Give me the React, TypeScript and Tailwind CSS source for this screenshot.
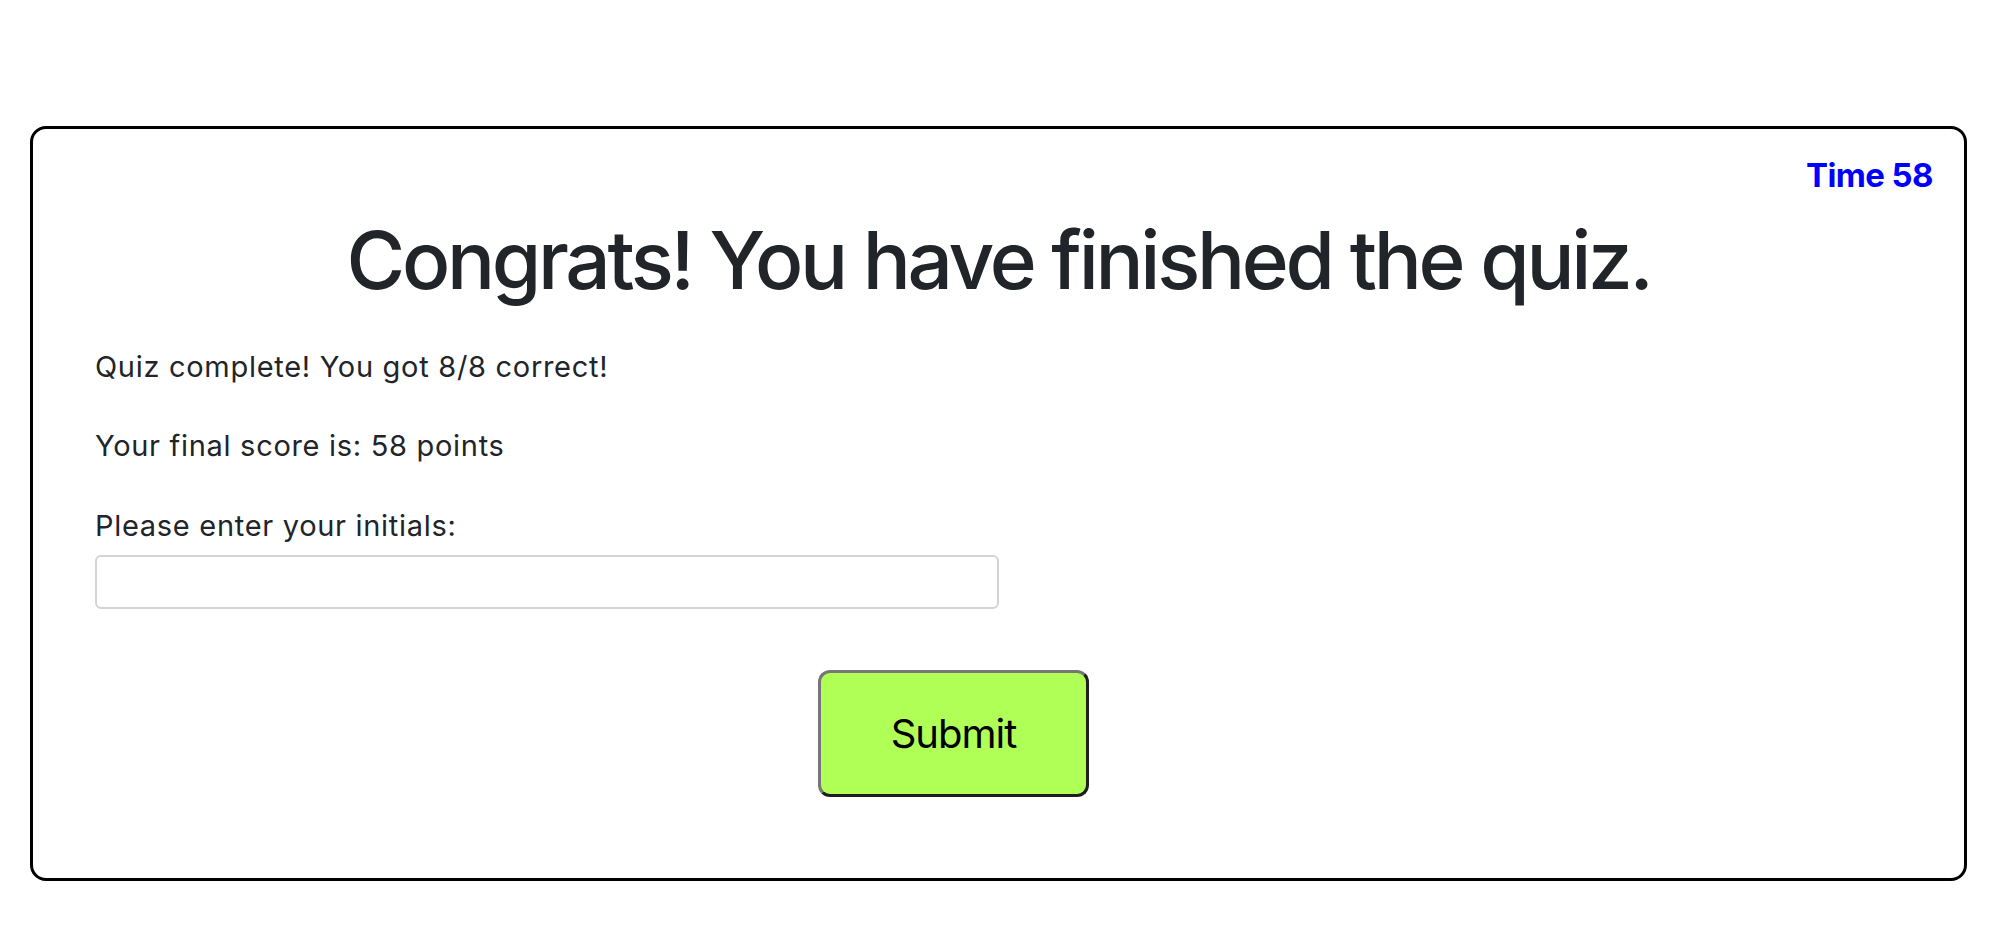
export default function App() {
  return (
    <div className="min-h-screen bg-white pt-[126px] pb-[61px] font-['Inter',sans-serif] text-[#212529]">
      <div className="ml-[30px] mr-[27px] rounded-[16px] border-[3px] border-black pt-[26px] pb-[81px]">
        <div className="pr-[31px] text-right text-[33px] font-bold leading-[40px] tracking-[-0.6px] text-[#0000ff]">
          Time 58
        </div>
        <h1 className="mt-[17px] text-center text-[80px] font-medium leading-[96px] tracking-[-3.3px]">
          Congrats! You have finished the quiz.
        </h1>
        <div className="pl-[62px] tracking-[0.7px]">
          <p className="mt-[39px] text-[29px] leading-[40px]">Quiz complete! You got 8/8 correct!</p>
          <p className="mt-[39px] text-[29px] leading-[40px]">Your final score is: 58 points</p>
          <label className="mt-[40px] block text-[29px] leading-[40px]">Please enter your initials:</label>
          <input
            type="text"
            className="mt-[9px] block h-[54px] w-[904px] rounded-[6px] border-2 border-[#d4d4d4] bg-white px-3 text-[29px] outline-none"
          />
        </div>
        <button
          type="button"
          className="mt-[61px] ml-[785px] block h-[127px] w-[271px] rounded-[12px] border-[3px] border-t-[#767676] border-l-[#767676] border-b-[#1e1e1e] border-r-[#1e1e1e] bg-[#b0ff57] text-[40px] tracking-[-1px] text-black"
        >
          Submit
        </button>
      </div>
    </div>
  );
}
